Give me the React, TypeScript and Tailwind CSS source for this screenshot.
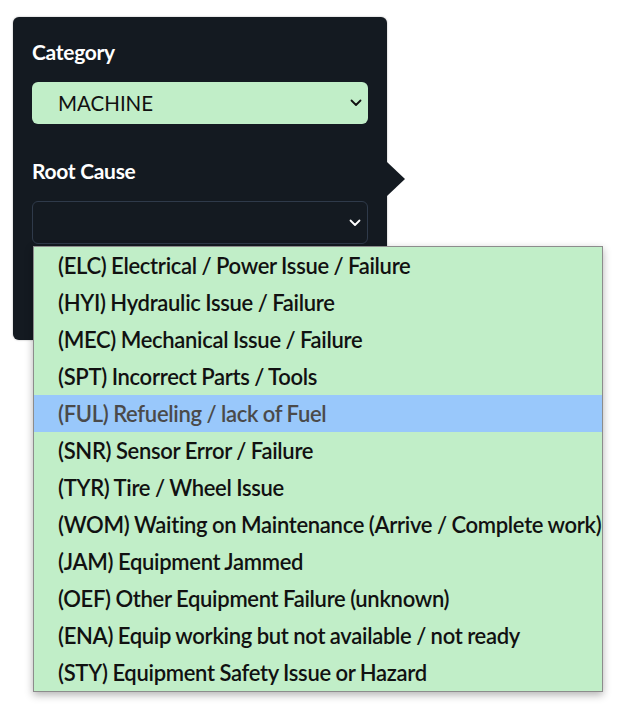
const causes = [
  "(ELC) Electrical / Power Issue / Failure",
  "(HYI) Hydraulic Issue / Failure",
  "(MEC) Mechanical Issue / Failure",
  "(SPT) Incorrect Parts / Tools",
  "(FUL) Refueling / lack of Fuel",
  "(SNR) Sensor Error / Failure",
  "(TYR) Tire / Wheel Issue",
  "(WOM) Waiting on Maintenance (Arrive / Complete work)",
  "(JAM) Equipment Jammed",
  "(OEF) Other Equipment Failure (unknown)",
  "(ENA) Equip working but not available / not ready",
  "(STY) Equipment Safety Issue or Hazard",
];

function Chevron({ className }: { className?: string }) {
  return (
    <svg viewBox="0 0 12 8" className={className} fill="none" stroke="currentColor" strokeWidth="1.8">
      <path d="M1.5 1.5 6 6l4.5-4.5" strokeLinecap="round" strokeLinejoin="round" />
    </svg>
  );
}

export default function App() {
  return (
    <div className="relative min-h-screen bg-white font-['Lato','Open_Sans',sans-serif]">
      <div className="pl-[13px] pt-[17px]">
        <div className="relative h-[323px] w-[374px] rounded-md bg-[#141a21] px-[19px] pt-[24px] shadow-[0_0_2px_rgba(0,0,0,0.35)]">
          <label className="block text-[21px] font-bold leading-[22px] tracking-[-0.3px] text-white">Category</label>
          <div className="mt-[19px] flex h-[42px] items-center justify-between rounded-md bg-[#c1eec8] pl-[26px] pr-[6px]">
            <span className="text-[20.5px] text-[#111]">MACHINE</span>
            <Chevron className="h-[8px] w-[12px] text-[#111]" />
          </div>
          <label className="mt-[36px] block text-[21px] font-bold leading-[22px] tracking-[-0.3px] text-white">Root Cause</label>
          <div className="mt-[19px] flex h-[43px] items-center justify-end rounded-md border border-[#2f3a4a] bg-[#141a21] pr-[6px]">
            <Chevron className="h-[8px] w-[12px] text-white" />
          </div>
          {/* popover pointer */}
          <div className="absolute right-[-18px] top-[145px] h-0 w-0 border-y-[17px] border-l-[18px] border-y-transparent border-l-[#141a21]" />
        </div>
      </div>

      <ul className="absolute left-[33px] top-[246px] w-[570px] border border-[#8c8c8c] bg-[#c1eec8] shadow-[0_3px_8px_rgba(0,0,0,0.3)]">
        {causes.map((c, i) => (
          <li
            key={c}
            className={
              i === 4
                ? "flex h-[37px] items-center whitespace-nowrap bg-[#99c8fb] pl-[24px] text-[22px] font-semibold tracking-[-0.3px] [word-spacing:-0.5px] text-[#4a4a4a]"
                : "flex h-[37px] items-center whitespace-nowrap pl-[24px] text-[22px] font-semibold tracking-[-0.3px] [word-spacing:-0.5px] text-[#111]"
            }
          >
            {c}
          </li>
        ))}
      </ul>
    </div>
  );
}
